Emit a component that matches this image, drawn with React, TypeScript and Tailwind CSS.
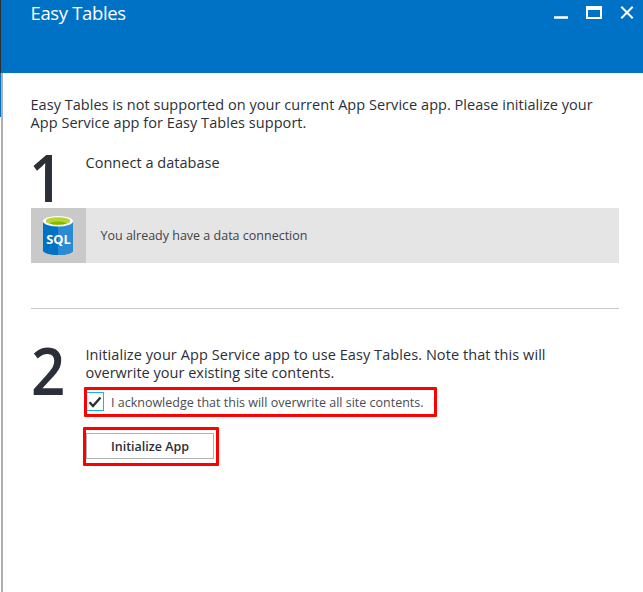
import React from "react";

function TitleBar() {
  return (
    <header className="flex h-[73px] bg-[#0072c6] border-l border-[#2b3038] text-white">
      <h1 className="ml-[29.5px] mt-px h-6 flex-1 whitespace-nowrap text-[18.5px] leading-6 tracking-[-0.35px]">Easy Tables</h1>
      <svg className="h-[26px] w-[90px]" viewBox="0 0 90 26" fill="none" stroke="#fff">
        <path d="M1 17.5h14" strokeWidth="2.5" />
        <path fill="#fff" stroke="none" fillRule="evenodd" d="M33 6h16v13H33zM35 10v7h12v-7z" />
        <path d="M68.3 6.8l11.4 11.4M79.7 6.8L68.3 18.2" strokeWidth="2" />
      </svg>
    </header>
  );
}

function SqlIcon() {
  return (
    <svg className="h-[55px] w-[55px]" viewBox="0 0 55 55">
      <path fill="#0072c6" d="M12 13v29.500c0 2.500 6.700 4.500 15 4.500s15-2 15-4.500V13z" />
      <path fill="#2a8ad4" d="M27 13v34c8.300 0 15-2 15-4.500V13z" />
      <ellipse cx="27" cy="13.200" rx="15" ry="5.300" fill="#fff" />
      <ellipse cx="27" cy="13" rx="12.300" ry="3.800" fill="#b8d432" />
      <path fill="#7fba00" d="M18.300 15.600c1.500-1.300 5-2 8.750-2s7.250.7 8.750 2c-2 .8-5 1.200-8.750 1.200s-6.750-.4-8.750-1.200z" />
      <text x="15.300" y="35.500" fill="#fff" fontSize="13" fontWeight="700" textLength="24.500" lengthAdjust="spacingAndGlyphs">SQL</text>
    </svg>
  );
}

export default function App() {
  return (
    <div className="h-[592px] w-[643px] overflow-hidden bg-white font-['Open_Sans','Noto_Sans',sans-serif] text-[#2b3038]">
      <TitleBar />
      <div className="flex h-[519px]">
        <div className="w-px">
          <div className="h-11 bg-[#0072c6]" />
        </div>
        <div className="w-0.5 bg-[#adafb1]" />
        <main className="flex-1 pl-7 pr-6 pt-[23px]">
          <p className="-ml-[0.5px] h-9 whitespace-nowrap text-[14.5px] leading-[18px]">
            <span className="tracking-[0.035px]">Easy Tables is not supported on your current App Service app. Please initialize your</span>
            <br />
            <span className="tracking-[0.05px]">App Service app for Easy Tables support.</span>
          </p>

          <section className="mt-[21px]">
            <div className="flex h-[55px]">
              <div className="-ml-[2px] w-[56.5px] origin-left scale-x-[0.91] text-[66px] font-semibold leading-[46px]">1</div>
              <p className="mt-px whitespace-nowrap text-[14.5px] leading-[18px] tracking-[0.03px]">Connect a database</p>
            </div>
            <div className="flex h-[55px] bg-[#e5e5e5]">
              <div className="w-[55px] bg-[#c9c9c9]"><SqlIcon /></div>
              <span className="ml-[14.5px] whitespace-nowrap text-[12.5px] leading-[55px] text-[#404348]">You already have a data connection</span>
            </div>
          </section>

          <hr className="mt-[45px] border-[#c8c8c8]" />

          <section className="mt-[37px] flex">
            <div className="w-[54px] shrink-0 origin-left scale-x-[0.91] text-[66px] font-semibold leading-[46px]">2</div>
            <div>
              <p className="ml-[0.5px] h-9 whitespace-nowrap text-[14.5px] leading-[18px]">
                <span className="tracking-[0.07px]">Initialize your App Service app to use Easy Tables. Note that this will</span>
                <br />
                <span className="tracking-[0.01px]">overwrite your existing site contents.</span>
              </p>
              <label className="-ml-px mt-[5px] flex h-[30px] w-[353px] items-start rounded-[1px] border-[3px] border-[#ff0000]">
                <span className="mt-0.5 flex h-[19px] w-[17px] items-center justify-center border-y border-r border-[#1bb0ee]">
                  <svg className="h-3 w-[14px]" viewBox="0 0 14 12" fill="none" stroke="#2b3038" strokeWidth="2.400">
                    <path d="M1.500 6.300L5 10l7.500-8.500" />
                  </svg>
                </span>
                <span className="ml-[7px] mt-[3px] whitespace-nowrap text-[12.500px] leading-[19px] text-[#4a4c52]">I acknowledge that this will overwrite all site contents.</span>
              </label>
              <div className="-ml-0.5 mt-2.5 h-[39px] w-[136px] rounded-[1px] border-[3px] border-[#ff0000] pt-[3px]">
                <button className="block h-[26px] w-32 whitespace-nowrap border border-[#aeb0b2] pt-px text-center text-[12.500px] font-semibold leading-[24px]">Initialize App</button>
              </div>
            </div>
          </section>
        </main>
      </div>
    </div>
  );
}
